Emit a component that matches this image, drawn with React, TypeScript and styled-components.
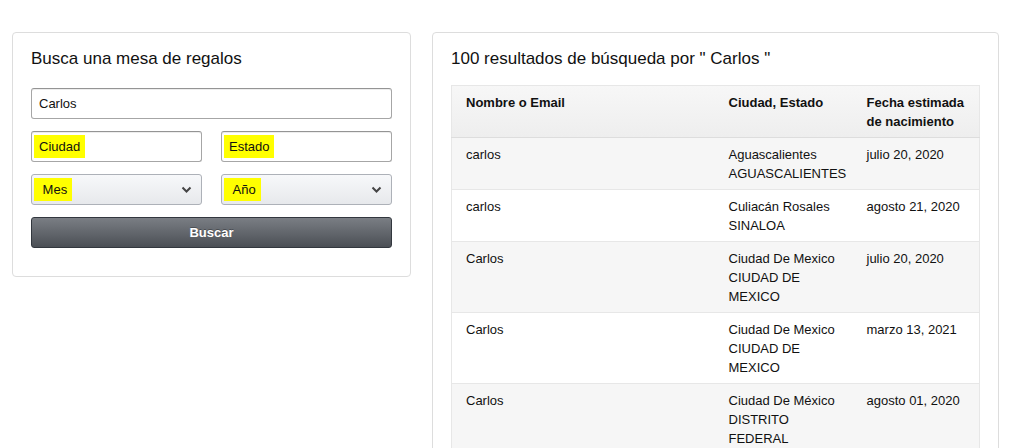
import React from "react";
import styled, { createGlobalStyle } from "styled-components";

const Global = createGlobalStyle`
  body { margin: 0; background: #fff; font-family: "Liberation Sans", Arial, sans-serif; color: #111; }
`;

const Page = styled.div`
  display: flex;
  align-items: flex-start;
  gap: 21px;
  padding: 32px 12px 0 12px;
`;

const Card = styled.section<{ $w: number }>`
  box-sizing: border-box;
  flex: none;
  width: ${(p) => p.$w}px;
  border: 1px solid #ddd;
  border-radius: 4px;
  padding: 14px 18px 28px 18px;
`;

const Title = styled.h2<{ $mb: number }>`
  margin: 0 0 ${(p) => p.$mb}px;
  font-size: 17px;
  line-height: 24px;
  font-weight: 400;
  color: #111;
`;

const Form = styled.div`
  display: grid;
  grid-template-columns: 1fr 1fr;
  column-gap: 19px;
  row-gap: 12px;
`;

const Field = styled.div<{ $full?: boolean }>`
  grid-column: ${(p) => (p.$full ? "1 / span 2" : "auto")};
  box-sizing: border-box;
  height: 31px;
  border: 1px solid #a6a6a6;
  border-top-color: #949494;
  border-radius: 3px;
  box-shadow: 0 1px 0 rgba(255,255,255,.5), 0 1px 0 rgba(0,0,0,.07) inset;
  display: flex;
  align-items: center;
  padding: 0 7px;
  font-size: 13px;
  color: #111;
`;

const Select = styled.div`
  box-sizing: border-box;
  height: 31px;
  border: 1px solid #adb1b8;
  border-radius: 3px;
  background: linear-gradient(to bottom, #f7f8fa, #e7e9ec);
  display: flex;
  align-items: center;
  justify-content: space-between;
  padding: 0 9px 0 7px;
  font-size: 13px;
  color: #111;
`;

const Mark = styled.span`
  background: #ffff00;
  padding: 4px 5px 4px 5px;
  margin-left: -5px;
`;

const Button = styled.button`
  grid-column: 1 / span 2;
  height: 31px;
  border: 1px solid #32373e;
  border-radius: 3px;
  background: linear-gradient(to bottom, #7a7e84, #4b4f55);
  color: #fff;
  font-family: inherit;
  font-weight: 700;
  font-size: 13px;
  text-shadow: 0 -1px 0 rgba(0,0,0,.3);
`;

const Table = styled.table`
  width: 100%;
  table-layout: fixed;
  border-collapse: collapse;
  border: 1px solid #e7e7e7;
  font-size: 13px;
  line-height: 19px;
`;

const Th = styled.th<{ $w?: number }>`
  box-sizing: border-box;
  text-align: left;
  vertical-align: top;
  font-weight: 700;
  padding: 7px 4px 6px 14px;
  width: ${(p) => (p.$w ? `${p.$w}px` : "auto")};
`;

const HeadRow = styled.tr`
  background: linear-gradient(to bottom, #f7f7f7, #eeeeee);
  border-bottom: 1px solid #ddd;
`;

const Row = styled.tr<{ $alt: boolean }>`
  background: ${(p) => (p.$alt ? "#f6f6f6" : "#fff")};
  border-top: 1px solid #e7e7e7;
`;

const Td = styled.td`
  vertical-align: top;
  padding: 7px 4px 6px 14px;
`;

const Chevron = () => (
  <svg width="11" height="8" viewBox="0 0 11 8">
    <path d="M1.5 1.5 L5.5 5.5 L9.5 1.5" fill="none" stroke="#444" strokeWidth="2" />
  </svg>
);

const rows = [
  ["carlos", ["Aguascalientes", "AGUASCALIENTES"], "julio 20, 2020"],
  ["carlos", ["Culiacán Rosales", "SINALOA"], "agosto 21, 2020"],
  ["Carlos", ["Ciudad De Mexico", "CIUDAD DE", "MEXICO"], "julio 20, 2020"],
  ["Carlos", ["Ciudad De Mexico", "CIUDAD DE", "MEXICO"], "marzo 13, 2021"],
  ["Carlos", ["Ciudad De México", "DISTRITO", "FEDERAL"], "agosto 01, 2020"],
] as const;

export default function App() {
  return (
    <>
      <Global />
      <Page>
        <Card $w={399}>
          <Title $mb={17}>Busca una mesa de regalos</Title>
          <Form>
            <Field $full>Carlos</Field>
            <Field><Mark>Ciudad</Mark></Field>
            <Field><Mark>Estado</Mark></Field>
            <Select><Mark>&nbsp;Mes</Mark><Chevron /></Select>
            <Select><Mark>&nbsp;Año</Mark><Chevron /></Select>
            <Button>Buscar</Button>
          </Form>
        </Card>
        <Card $w={567}>
          <Title $mb={14}>100 resultados de búsqueda por " Carlos "</Title>
          <Table>
            <thead>
              <HeadRow>
                <Th $w={263}>Nombre o Email</Th>
                <Th $w={138}>Ciudad, Estado</Th>
                <Th>Fecha estimada de nacimiento</Th>
              </HeadRow>
            </thead>
            <tbody>
              {rows.map((r, i) => (
                <Row key={i} $alt={i % 2 === 0}>
                  <Td>{r[0]}</Td>
                  <Td>{r[1].map((l, j) => (<React.Fragment key={j}>{j > 0 && <br />}{l}</React.Fragment>))}</Td>
                  <Td>{r[2]}</Td>
                </Row>
              ))}
            </tbody>
          </Table>
        </Card>
      </Page>
    </>
  );
}
